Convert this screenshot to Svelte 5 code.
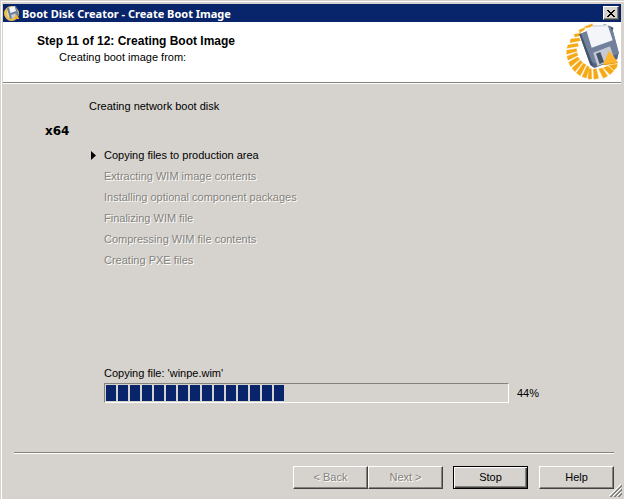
<script>
    let percent = 44;
    let currentFile = 'winpe.wim';
    let activeStep = 0;

    const segments = 34;
    const steps = [
        'Copying files to production area',
        'Extracting WIM image contents',
        'Installing optional component packages',
        'Finalizing WIM file',
        'Compressing WIM file contents',
        'Creating PXE files'
    ];

    $: filled = Math.round((percent / 100) * segments);
</script>

<div class="window">
    <div class="titlebar">
        <svg class="title-icon" viewBox="0 0 16 16" aria-hidden="true">
            <circle cx="7.500" cy="8.500" r="6" fill="#e8dcae" stroke="#e9c153" stroke-width="3" />
            <path d="M3 3 L12 1 L15 11 L6 14 Z" fill="#71809d" />
            <path d="M5 2.500 L10.500 1 L12 6 L6.500 8 Z" fill="#f4f5f8" />
            <path d="M7 10 L11.500 8.500 L12.500 12 L8 13.500 Z" fill="#c8ccd6" />
            <path d="M12 9 L15.500 14 L10 14 Z" fill="#f3b31c" />
        </svg>
        <span class="title">Boot Disk Creator - Create Boot Image</span>
        <button class="close" aria-label="Close">
            <svg viewBox="0 0 8 7" aria-hidden="true" shape-rendering="crispEdges">
                <path d="M0 0h2v1h1v1h2v-1h1v-1h2v1h-1v1h-1v1h-1v1h1v1h1v1h1v1h-2v-1h-1v-1h-2v1h-1v1h-2v-1h1v-1h1v-1h1v-1h-1v-1h-1v-1h-1z" />
            </svg>
        </button>
    </div>

    <header>
        <div class="heading">
            <h1>Step 11 of 12: Creating Boot Image</h1>
            <p>Creating boot image from:</p>
        </div>
        <svg class="logo" viewBox="75 69 168 174" aria-hidden="true">
            <g fill="#f7a915" stroke="#f7a915" stroke-width="1">
                <path d="M134 80 L157 71 L160 79 L139 84 Z" />
                <path d="M117 90 L136 82 L132 90 L119 99 Z" />
                <path d="M102 103 L121 100 L122 107 L105 111 Z" />
                <path d="M92 117 L118 114 L121 122 L90 128 Z" />
                <path d="M84 135 L113 130 L115 139 L81 145 Z" />
                <path d="M80 151 L109 146 L111 154 L80 163 Z" />
                <path d="M81 169 L110 158 L114 166 L84 181 Z" />
                <path d="M86 187 L113 171 L119 178 L92 200 Z" />
                <path d="M96 205 L121 181 L128 187 L105 215 Z" />
                <path d="M109 219 L130 190 L138 194 L121 227 Z" />
                <path d="M126 230 L141 197 L148 202 L139 234 Z" />
                <path d="M146 207 L154 206 L155 237 L144 237 Z" />
                <path d="M160 208 L169 206 L176 235 L162 238 Z" />
                <path d="M176 207 L187 204 L203 228 L190 235 Z" />
                <path d="M190 203 L204 198 L221 213 L210 224 Z" />
                <path d="M206 196 L232 192 L230 202 L222 211 Z" />
            </g>
            <path d="M118 103 L143 92 L194 73 L215 80 L236 158 L232 178 L163 204 L151 195 Z" fill="#55647f" />
            <path d="M122 101 L196 74 L216 82 L237 160 L164 191 L151 181 Z" fill="#71819c" />
            <path d="M118 103 L123 101 L162 202 L151 195 Z" fill="#46546c" />
            <path d="M139 91 L157 77 L203 75 L218 121 L155 143 Z" fill="#f4f5f8" />
            <path d="M157 76 L203 74 L204 79 L157 81 Z" fill="#d9dde5" />
            <path d="M160 158 L210 139 L223 177 L172 199 Z" fill="#c4c9d2" />
            <path d="M168 161 L181 156 L192 186 L179 192 Z" fill="#45536d" />
            <path d="M213 83 L219 82 L220 88 L215 89 Z" fill="#34435c" />
            <path d="M207 152 L234 187 L189 194 Z" fill="#ffb52b" />
            <path d="M189 193 L234 186 L232 190 L192 196 Z" fill="#e59a14" />
        </svg>
    </header>

    <main>
        <p class="task">Creating network boot disk</p>
        <h2>x64</h2>
        <ul>
            {#each steps as step, i}
                <li class:pending={i !== activeStep}>
                    {#if i === activeStep}
                        <svg class="marker" viewBox="0 0 5 9" aria-hidden="true">
                            <path d="M0 0 L5 4.500 L0 9 Z" />
                        </svg>
                    {/if}
                    <span>{step}</span>
                </li>
            {/each}
        </ul>

        <div class="progress">
            <p id="progress-label">Copying file: '{currentFile}'</p>
            <div class="progress-row">
                <div
                    class="bar"
                    role="progressbar"
                    aria-labelledby="progress-label"
                    aria-valuemin="0"
                    aria-valuemax="100"
                    aria-valuenow={percent}
                >
                    {#each Array(filled) as _}
                        <span class="segment"></span>
                    {/each}
                </div>
                <span class="percent">{percent}%</span>
            </div>
        </div>
    </main>

    <footer>
        <div class="pair">
            <button class="btn" disabled>&lt; Back</button>
            <button class="btn" disabled>Next &gt;</button>
        </div>
        <button class="btn default">Stop</button>
        <button class="btn help">Help</button>
    </footer>

    <svg class="grip" viewBox="0 0 13 13" aria-hidden="true">
        <path d="M0 12 L12 0 M4 12 L12 4 M8 12 L12 8" stroke="#fff" />
        <path d="M1 13 L13 1 M2 13 L13 2 M5 13 L13 5 M6 13 L13 6 M9 13 L13 9 M10 13 L13 10" stroke="#84827c" />
    </svg>
</div>

<style>
:global(body) {
    margin: 0;
    background: #d6d3ce;
}

.window {
    position: relative;
    box-sizing: border-box;
    display: flex;
    flex-direction: column;
    min-height: 100vh;
    padding: 4px 3px 0;
    background: #d6d3ce;
    box-shadow: inset 1px 1px #d6d3ce, inset 2px 2px #fff;
    color: #000;
    font-family: "Liberation Sans", Arial, sans-serif;
    font-size: 11px;
    line-height: 13px;
}

h1,
h2,
p,
ul {
    margin: 0;
    padding: 0;
}

.titlebar {
    display: flex;
    align-items: center;
    height: 18px;
    padding: 0 2px 0 1px;
    background: #08246b;
    color: #fff;
}

.title-icon {
    width: 16px;
    height: 16px;
    margin-right: 2px;
}

.title {
    flex: 1;
    font-family: "Noto Sans", Tahoma, sans-serif;
    font-weight: bold;
    white-space: nowrap;
}

.close {
    display: flex;
    align-items: center;
    justify-content: center;
    width: 16px;
    height: 14px;
    padding: 0;
    border: 1px solid;
    border-color: #fff #424142 #424142 #fff;
    background: #d6d3ce;
    box-shadow: inset -1px -1px #84827c;
}

.close svg {
    width: 8px;
    height: 7px;
}

header {
    display: flex;
    justify-content: space-between;
    height: 60px;
    border-bottom: 1px solid #84827c;
    background: #fff;
    box-shadow: 0 1px #fff;
}

.heading {
    padding: 13px 0 0 34px;
}

h1 {
    font-size: 12px;
    line-height: 13px;
}

.heading p {
    margin-top: 3px;
    padding-left: 22px;
}

.logo {
    width: 56px;
    height: 58px;
    margin-top: 1px;
}

main {
    flex: 1;
    padding: 17px 0 0 86px;
}

h2 {
    margin: 11px 0 0 -44px;
    font-family: "DejaVu Sans", Verdana, sans-serif;
    font-size: 12px;
    line-height: 15px;
}

ul {
    margin-top: 6px;
    list-style: none;
}

li {
    display: flex;
    align-items: center;
    height: 21px;
    padding-left: 15px;
}

.marker {
    width: 5px;
    height: 9px;
    margin: 0 8px 0 -13px;
}

.pending,
.btn:disabled {
    color: #84827c;
    text-shadow: 1px 1px #fff;
}

.progress {
    margin-top: 96px;
    padding: 0 76px 0 15px;
}

.progress-row {
    display: flex;
    align-items: center;
    margin-top: 3px;
}

.bar {
    display: flex;
    flex: 1;
    gap: 2px;
    height: 16px;
    padding: 1px;
    border: 1px solid;
    border-color: #84827c #fff #fff #84827c;
}

.segment {
    width: 10px;
    background: #08246b;
}

.percent {
    width: 28px;
    margin-left: 8px;
}

footer {
    display: flex;
    justify-content: flex-end;
    margin: 0 7px 0 11px;
    padding: 13px 0 10px;
    border-top: 1px solid #84827c;
    box-shadow: inset 0 1px #fff;
}

.pair {
    display: flex;
    margin-right: 10px;
}

.btn {
    box-sizing: border-box;
    width: 75px;
    height: 23px;
    padding: 0;
    border: 1px solid;
    border-color: #fff #424142 #424142 #fff;
    background: #d6d3ce;
    box-shadow: inset -1px -1px #84827c;
    color: #000;
    font: inherit;
}

.default {
    border-color: #000;
    box-shadow: inset 1px 1px #fff, inset -1px -1px #424142, inset -2px -2px #84827c;
}

.help {
    margin-left: 11px;
}

.grip {
    position: absolute;
    right: 2px;
    bottom: 2px;
    width: 13px;
    height: 13px;
}
</style>
